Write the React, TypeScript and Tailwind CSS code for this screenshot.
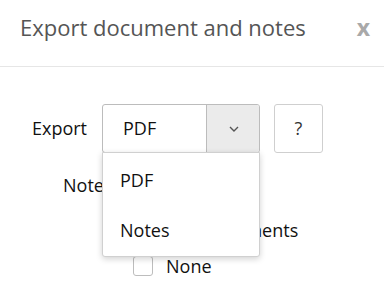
import { useState } from "react";

const font = { fontFamily: '"Open Sans", "Liberation Sans", sans-serif' };

function Checkbox({ label }: { label: string }) {
  return (
    <label className="flex items-center h-[24px] pl-[133px] gap-[13px] text-[18px] text-[#111]">
      <span className="size-[20px] border border-[#bdbdbd] rounded-[3px] bg-white" />
      <span className="leading-[24px]">{label}</span>
    </label>
  );
}

export default function App() {
  const [value, setValue] = useState("PDF");
  const [open, setOpen] = useState(true);

  return (
    <div className="relative w-[384px] h-[290px] bg-white overflow-hidden" style={font}>
      {/* Header */}
      <div className="flex items-start justify-between h-[67px] pl-[20px] pr-[14px] pt-[12px] border-b border-[#e6e6e6]">
        <h2 className="text-[22px] leading-[30px] text-[#555] font-normal">Export document and notes</h2>
        <button className="text-[23px] leading-[30px] font-bold text-[#a9a9a9]">x</button>
      </div>

      {/* Body */}
      <div className="pt-[37px]">
        <div className="flex items-center h-[49px]">
          <span className="pl-[32px] w-[102px] text-[18px] text-[#111]">Export</span>
          <div className="relative">
            <button
              onClick={() => setOpen(!open)}
              className="flex h-[49px] w-[158px] border border-[#bcbcbc] rounded-[3px] overflow-hidden bg-white"
            >
              <span className="flex-1 flex items-center pl-[20px] text-[18px] text-[#111]">{value}</span>
              <span className="w-[53px] flex items-center justify-center bg-[#ebebeb] border-l border-[#bcbcbc]">
                <svg width="10" height="6" viewBox="0 0 10 6" fill="none" className="ml-[2px]">
                  <path d="M1 1l4 4 4-4" stroke="#555" strokeWidth="1.4" />
                </svg>
              </span>
            </button>
            {open && (
              <div className="absolute left-0 top-[48px] z-10 w-[158px] h-[105px] py-[2px] bg-white border border-[#d0d0d0] rounded-b-[3px] shadow-[0_2px_6px_rgba(0,0,0,0.18)]">
                {["PDF", "Notes"].map((o) => (
                  <div
                    key={o}
                    onClick={() => {
                      setValue(o);
                      setOpen(false);
                    }}
                    className="h-[50px] flex items-center pl-[17px] text-[18px] text-[#111]"
                  >
                    {o}
                  </div>
                ))}
              </div>
            )}
          </div>
          <button className="ml-[14px] size-[49px] border border-[#cfcfcf] rounded-[3px] text-[18px] text-[#333] bg-white">
            ?
          </button>
        </div>

        <div className="mt-[20px] pl-[63px] text-[18px] leading-[24px] text-[#111]">Notes</div>
        <div className="mt-[21px] flex flex-col gap-[12px]">
          <Checkbox label="With comments" />
          <Checkbox label="None" />
        </div>
      </div>
    </div>
  );
}
